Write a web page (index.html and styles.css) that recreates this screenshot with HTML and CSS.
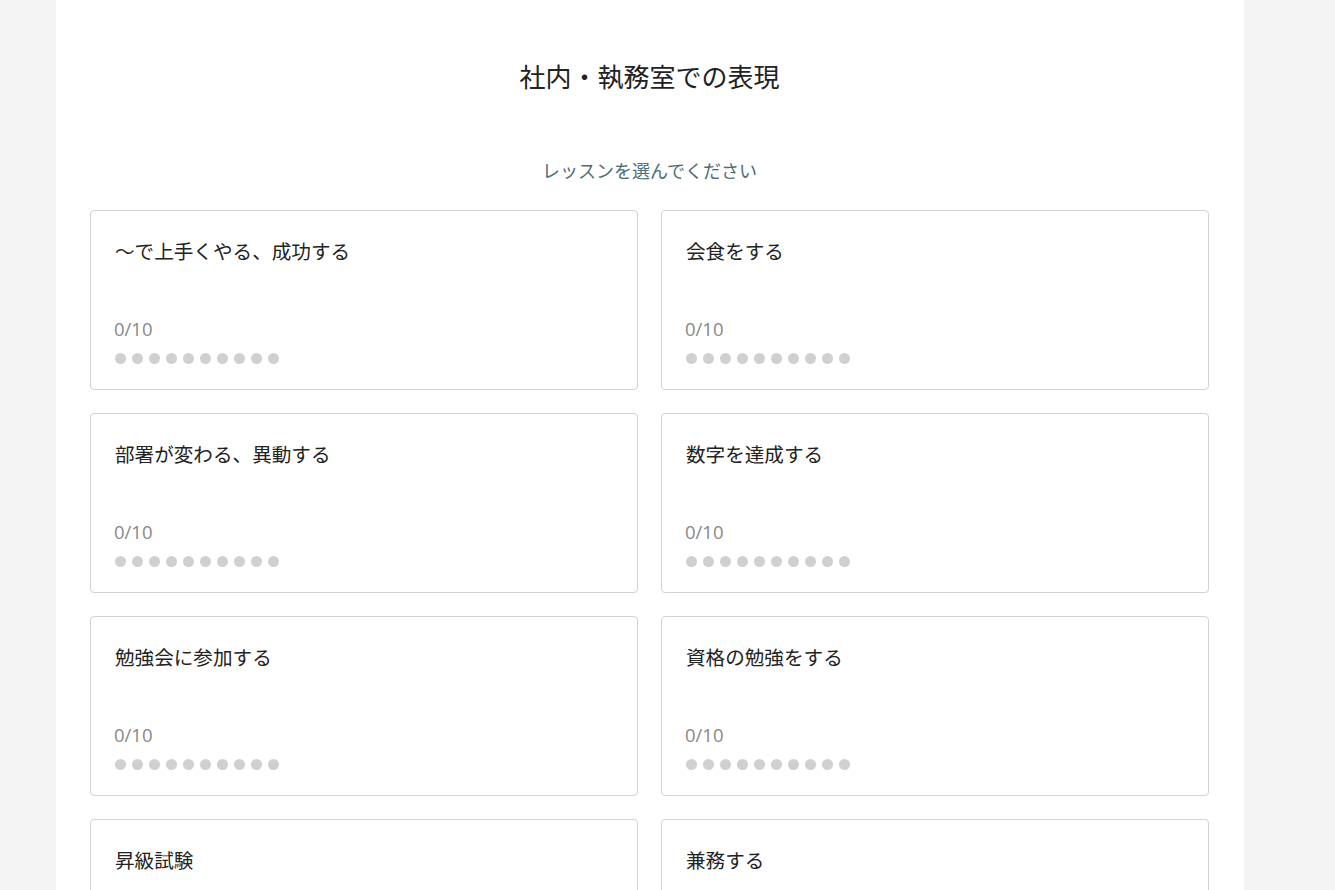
FILE: index.html
```html
<!DOCTYPE html>
<html lang="ja">
<head>
<meta charset="utf-8">
<link rel="stylesheet" href="styles.css">
</head>
<body>
<main class="page">
  <h1 class="title">社内・執務室での表現</h1>
  <p class="subtitle">レッスンを選んでください</p>
  <div class="grid">
    <div class="card"><div class="card-title">～で上手くやる、成功する</div><div class="progress"><div class="count">0/10</div><div class="dots"><i></i><i></i><i></i><i></i><i></i><i></i><i></i><i></i><i></i><i></i></div></div></div>
    <div class="card"><div class="card-title">会食をする</div><div class="progress"><div class="count">0/10</div><div class="dots"><i></i><i></i><i></i><i></i><i></i><i></i><i></i><i></i><i></i><i></i></div></div></div>
    <div class="card"><div class="card-title">部署が変わる、異動する</div><div class="progress"><div class="count">0/10</div><div class="dots"><i></i><i></i><i></i><i></i><i></i><i></i><i></i><i></i><i></i><i></i></div></div></div>
    <div class="card"><div class="card-title">数字を達成する</div><div class="progress"><div class="count">0/10</div><div class="dots"><i></i><i></i><i></i><i></i><i></i><i></i><i></i><i></i><i></i><i></i></div></div></div>
    <div class="card"><div class="card-title">勉強会に参加する</div><div class="progress"><div class="count">0/10</div><div class="dots"><i></i><i></i><i></i><i></i><i></i><i></i><i></i><i></i><i></i><i></i></div></div></div>
    <div class="card"><div class="card-title">資格の勉強をする</div><div class="progress"><div class="count">0/10</div><div class="dots"><i></i><i></i><i></i><i></i><i></i><i></i><i></i><i></i><i></i><i></i></div></div></div>
    <div class="card"><div class="card-title">昇級試験</div><div class="progress"><div class="count">0/10</div><div class="dots"><i></i><i></i><i></i><i></i><i></i><i></i><i></i><i></i><i></i><i></i></div></div></div>
    <div class="card"><div class="card-title">兼務する</div><div class="progress"><div class="count">0/10</div><div class="dots"><i></i><i></i><i></i><i></i><i></i><i></i><i></i><i></i><i></i><i></i></div></div></div>
  </div>
</main>
</body>
</html>
```

FILE: styles.css
```css
html, body {
  margin: 0;
  padding: 0;
  background: #f4f4f4;
  font-family: "Noto Sans CJK JP", "Noto Sans", sans-serif;
  color: #222;
}
.page {
  width: 1188px;
  margin-left: 56px;
  background: #fff;
  min-height: 100vh;
  box-sizing: border-box;
  padding: 56px 35px 40px 34px;
}
.title {
  margin: 0;
  text-align: center;
  font-size: 26px;
  font-weight: 400;
  line-height: 40px;
  color: #222;
}
.subtitle {
  margin: 61px 0 0;
  text-align: center;
  font-size: 18px;
  line-height: 26px;
  color: #4d6c72;
}
.grid {
  margin-top: 27px;
  display: grid;
  grid-template-columns: 548px 548px;
  column-gap: 23px;
  row-gap: 23px;
}
.card {
  height: 180px;
  box-sizing: border-box;
  border: 1px solid #d2d2d2;
  border-radius: 4px;
  padding: 24px 24px 25px 24px;
  display: flex;
  flex-direction: column;
  justify-content: space-between;
}
.card-title {
  font-size: 19.6px;
  line-height: 32px;
  color: #222;
}
.count {
  font-family: "Open Sans", "Noto Sans", sans-serif;
  font-size: 18.5px;
  line-height: 24px;
  color: #888;
  margin-left: -1px;
}
.dots {
  display: flex;
  gap: 6px;
  margin-top: 12px;
}
.dots i {
  width: 11px;
  height: 11px;
  border-radius: 50%;
  background: #d0d0d0;
}
```
